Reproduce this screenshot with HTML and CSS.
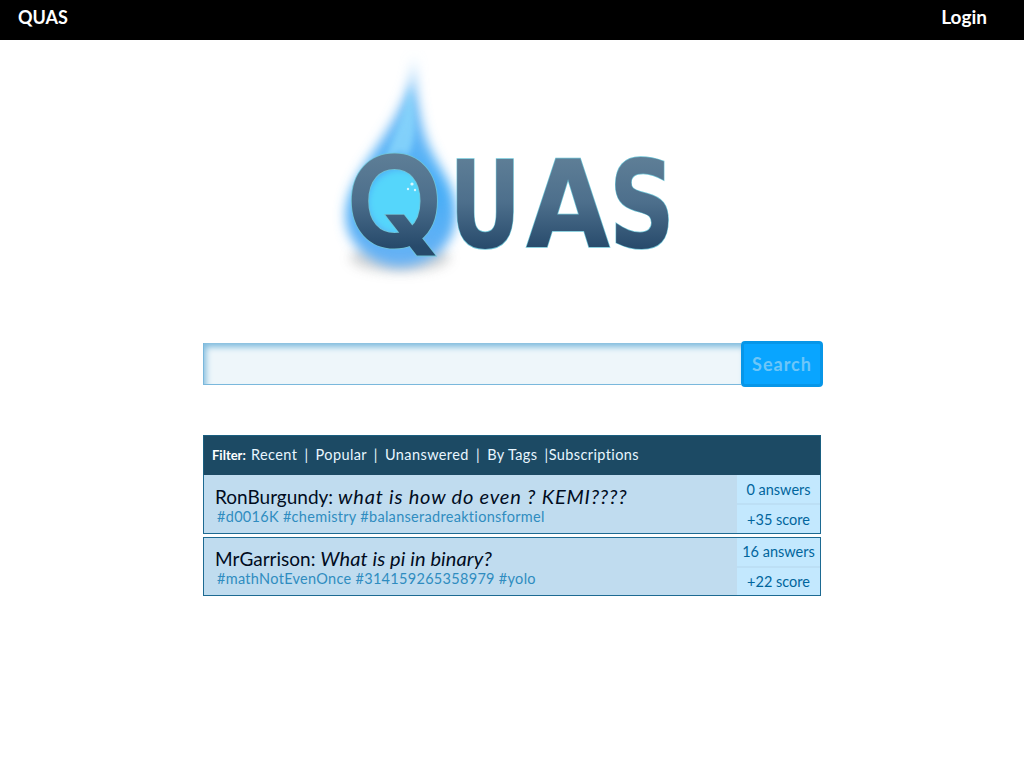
FILE: index.html
```html
<!DOCTYPE html>
<html lang="en">

<head>
    <meta charset="UTF-8">
    <meta name="viewport" content="width=device-width, initial-scale=1.0">
    <title>QUAS</title>
    <link rel="stylesheet" href="styles.css">
</head>

<body>
    <header class="topbar">
        <a class="brand" href="#">QUAS</a>
        <a class="login" href="#">Login</a>
    </header>

    <main class="container">
        <div class="logo">
            <svg width="350" height="240" viewBox="0 0 350 240">
                <defs>
                    <linearGradient id="letterFill" gradientUnits="userSpaceOnUse" x1="0" y1="-92" x2="0" y2="2">
                        <stop offset="0" stop-color="#5f7f97" />
                        <stop offset="0.5" stop-color="#4d6f8c" />
                        <stop offset="1" stop-color="#274a6b" />
                    </linearGradient>
                    <linearGradient id="flameFill" gradientUnits="userSpaceOnUse" x1="0" y1="5" x2="0" y2="215">
                        <stop offset="0" stop-color="#b4dcfa" />
                        <stop offset="0.25" stop-color="#6db8f5" />
                        <stop offset="0.65" stop-color="#48aef7" />
                        <stop offset="1" stop-color="#6ab2f4" />
                    </linearGradient>
                    <filter id="blurBig" x="-40%" y="-40%" width="180%" height="180%">
                        <feGaussianBlur stdDeviation="6" />
                    </filter>
                    <filter id="blurSmall" x="-40%" y="-40%" width="180%" height="180%">
                        <feGaussianBlur stdDeviation="3" />
                    </filter>
                    <g id="quasLetters">
                        <text class="letter-q" transform="translate(17 195) scale(1.05 1.02)">Q</text>
                        <text transform="translate(119 197) scale(0.73 1)">U</text>
                        <text transform="translate(196 197) scale(0.89 1)">A</text>
                        <text transform="translate(279 197) scale(0.75 1)">S</text>
                    </g>
                </defs>
                <ellipse cx="70" cy="208" rx="50" ry="14" fill="#8a8a8a" opacity="0.35" filter="url(#blurBig)" />
                <path d="M84 4C82 44 62 74 42 104C24 130 14 150 16 172C19 198 46 218 72 217C100 216 126 196 126 164C126 136 110 120 100 98C90 76 86 44 84 4Z" fill="url(#flameFill)" filter="url(#blurBig)" />
                <path d="M80 36C74 68 60 92 54 114C66 104 72 96 76 108C88 90 86 64 80 36Z" fill="#8ad8fc" opacity="0.8" filter="url(#blurSmall)" />
                <circle cx="70" cy="152" r="32" fill="#55d6fb" filter="url(#blurSmall)" />
                <circle cx="82" cy="134" r="1.6" fill="#d9f7ff" />
                <circle cx="78" cy="139" r="1.2" fill="#d9f7ff" />
                <circle cx="85" cy="140" r="1.2" fill="#d9f7ff" />
                <use href="#quasLetters" class="letters-edge" />
                <use href="#quasLetters" class="letters-face" />
            </svg>
        </div>

        <form class="search">
            <input class="search-input" type="text">
            <button class="search-button" type="button">Search</button>
        </form>

        <section class="questions">
            <nav class="filter">
                <b>Filter:</b> <a href="#">Recent</a> <span class="sep">|</span> <a href="#">Popular</a> <span class="sep">|</span> <a href="#">Unanswered</a> <span class="sep">|</span> <a href="#">By Tags</a> <span class="sep tight">|</span><a href="#">Subscriptions</a>
            </nav>

            <article class="question first">
                <div class="question-body">
                    <div class="question-title">RonBurgundy: <em class="wide">what is how do even ? KEMI????</em></div>
                    <div class="question-tags">#d0016K #chemistry #balanseradreaktionsformel</div>
                </div>
                <div class="question-stats">
                    <div class="stat">0 answers</div>
                    <div class="stat">+35 score</div>
                </div>
            </article>

            <article class="question">
                <div class="question-body">
                    <div class="question-title">MrGarrison: <em>What is pi in binary?</em></div>
                    <div class="question-tags">#mathNotEvenOnce #314159265358979 #yolo</div>
                </div>
                <div class="question-stats">
                    <div class="stat">16 answers</div>
                    <div class="stat">+22 score</div>
                </div>
            </article>
        </section>
    </main>
</body>

</html>
```
FILE: styles.css
```css
body {
    margin: 0;
    background-color: #ffffff;
    font-family: 'Lato', sans-serif;
    color: #000c1e;
}

a {
    color: inherit;
    text-decoration: none;
}

.topbar {
    display: flex;
    justify-content: space-between;
    align-items: center;
    height: 40px;
    padding: 0 37px 7px 18px;
    box-sizing: border-box;
    background-color: #000000;
    color: #ffffff;
    font-weight: 700;
    font-size: 19px;
}

.brand {
    font-size: 18px;
}

.container {
    width: 620px;
    margin-left: 203px;
}

.logo {
    height: 240px;
    padding: 10px 0 0 127px;
}

.logo svg {
    display: block;
}

.logo text {
    font-family: 'DejaVu Sans', sans-serif;
    font-weight: 700;
    font-size: 122px;
    stroke-width: var(--edge);
}

.logo .letter-q {
    font-family: 'Inter', sans-serif;
    font-weight: 400;
    font-size: 118px;
    stroke-width: calc(var(--edge) + 5px);
}

.letters-edge {
    --edge: 1.5px;
    fill: #6fc4d6;
    stroke: #6fc4d6;
}

.letters-face {
    --edge: 0px;
    fill: url(#letterFill);
    stroke: url(#letterFill);
}

.search {
    display: flex;
    align-items: center;
    height: 46px;
    margin-top: 51px;
}

.search-input {
    width: 538px;
    height: 42px;
    box-sizing: border-box;
    border: 0;
    border-bottom: 1px solid #7ab8dc;
    border-left: 1px solid #7ab8dc;
    background-color: #eef6fa;
    box-shadow: inset 3px 5px 6px -1px #7fbbdd;
}

.search-button {
    width: 82px;
    height: 46px;
    padding: 0;
    border: 3px solid #0796e8;
    border-radius: 4px;
    background-color: #09a5ff;
    color: #6ec6f8;
    font-family: 'Lato', sans-serif;
    font-weight: 700;
    font-size: 18px;
    letter-spacing: 1px;
}

.questions {
    width: 618px;
    margin-top: 48px;
}

.filter {
    height: 40px;
    box-sizing: border-box;
    padding: 10px 8px 0;
    border: 1px solid #1a5f80;
    border-bottom: 0;
    background-color: #1c4a64;
    color: #e8f6ff;
    font-size: 14.5px;
    line-height: 18px;
    letter-spacing: 0.4px;
    white-space: nowrap;
}

.filter b {
    margin-right: 1px;
    color: #ffffff;
    font-size: 13px;
    letter-spacing: 0;
}

.sep {
    margin: 0 3px;
}

.sep.tight {
    margin-right: 0;
}

.question {
    display: flex;
    height: 59px;
    box-sizing: border-box;
    margin-top: 3px;
    border: 1px solid #1d6a92;
    background-color: #c0dcef;
}

.question.first {
    margin-top: 0;
    border-top: 0;
}

.question-body {
    flex: 1;
    padding: 8px 0 0 11px;
}

.question.first .question-body {
    padding-top: 9px;
}

.question-title {
    font-size: 19px;
    line-height: 25px;
    white-space: nowrap;
}

.question-title em {
    font-size: 20px;
    letter-spacing: 0.1px;
}

.question-title em.wide {
    letter-spacing: 0.8px;
}

.question-tags {
    margin: 1px 0 0 2px;
    color: #2f8cc0;
    font-size: 14.5px;
    line-height: 14px;
    letter-spacing: 0.3px;
    white-space: nowrap;
}

.question-stats {
    display: flex;
    flex-direction: column;
    gap: 2px;
    width: 83px;
    background-color: #bcdff5;
}

.stat {
    display: flex;
    flex: 1;
    justify-content: center;
    align-items: center;
    background-color: #c3e8fe;
    color: #00659c;
    font-size: 14.5px;
}
```
